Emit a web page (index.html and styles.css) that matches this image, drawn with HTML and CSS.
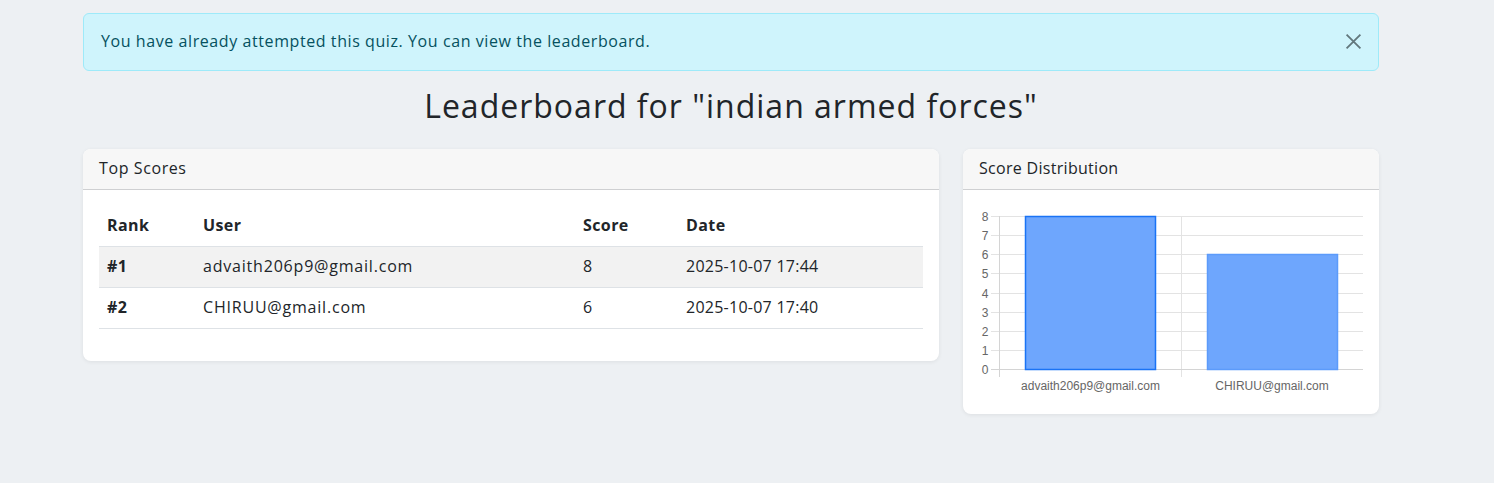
FILE: index.html
```html
<!DOCTYPE html>
<html lang="en">
<head>
<meta charset="utf-8">
<title>Leaderboard</title>
<link rel="stylesheet" href="styles.css">
</head>
<body>
<main class="container">
  <div class="alert">
    <span class="alert-text">You have already attempted this quiz. You can view the leaderboard.</span>
    <button class="alert-close" aria-label="Close">
      <svg width="17" height="17" viewBox="0 0 16 16"><path d="M1.5 1.5 L14.5 14.5 M14.5 1.5 L1.5 14.5" stroke="currentColor" stroke-width="1.7" fill="none"/></svg>
    </button>
  </div>
  <h2 class="title">Leaderboard for "indian armed forces"</h2>
  <div class="row">
    <section class="card card-wide">
      <div class="card-header">Top Scores</div>
      <div class="card-body">
        <table class="table">
          <colgroup>
            <col class="c-rank"><col class="c-user"><col class="c-score"><col class="c-date">
          </colgroup>
          <thead>
            <tr><th>Rank</th><th>User</th><th>Score</th><th>Date</th></tr>
          </thead>
          <tbody>
            <tr class="hl"><td class="rank">#1</td><td>advaith206p9@gmail.com</td><td>8</td><td class="date">2025-10-07 17:44</td></tr>
            <tr><td class="rank">#2</td><td>CHIRUU@gmail.com</td><td>6</td><td class="date">2025-10-07 17:40</td></tr>
          </tbody>
        </table>
      </div>
    </section>
    <section class="card card-narrow">
      <div class="card-header">Score Distribution</div>
      <div class="card-body">
        <svg class="chart" width="384" height="192" viewBox="0 0 384 192">
          <g class="grid">
            <line x1="12" y1="10.5" x2="384" y2="10.5"/>
            <line x1="12" y1="29.5" x2="384" y2="29.5"/>
            <line x1="12" y1="48.5" x2="384" y2="48.5"/>
            <line x1="12" y1="67.5" x2="384" y2="67.5"/>
            <line x1="12" y1="87.5" x2="384" y2="87.5"/>
            <line x1="12" y1="106.5" x2="384" y2="106.5"/>
            <line x1="12" y1="125.5" x2="384" y2="125.5"/>
            <line x1="12" y1="144.5" x2="384" y2="144.5"/>
            <line x1="202.5" y1="10" x2="202.5" y2="171"/>
          </g>
          <g class="axis">
            <line x1="12" y1="163.5" x2="384" y2="163.5"/>
            <line x1="20.5" y1="10" x2="20.5" y2="171"/>
          </g>
          <rect class="bar bar1" x="46.5" y="10.5" width="130" height="153"/>
          <rect class="bar bar2" x="228.5" y="48.5" width="130" height="115"/>
          <g class="ylab">
            <text x="9.5" y="14.5">8</text>
            <text x="9.5" y="33.5">7</text>
            <text x="9.5" y="52.5">6</text>
            <text x="9.5" y="71.5">5</text>
            <text x="9.5" y="91.5">4</text>
            <text x="9.5" y="110.5">3</text>
            <text x="9.5" y="129.5">2</text>
            <text x="9.5" y="148.5">1</text>
            <text x="9.5" y="167.5">0</text>
          </g>
          <g class="xlab">
            <text x="111.5" y="184">advaith206p9@gmail.com</text>
            <text x="293" y="184">CHIRUU@gmail.com</text>
          </g>
        </svg>
      </div>
    </section>
  </div>
</main>
</body>
</html>
```
FILE: styles.css
```css
* { box-sizing: border-box; }
html, body { margin: 0; padding: 0; }
body {
  background: #edf0f3;
  color: #212529;
  font-family: "Open Sans", "Noto Sans", sans-serif;
  font-size: 16px;
  line-height: 24px;
  width: 1494px;
  height: 483px;
  overflow: hidden;
}
.container {
  width: 1296px;
  margin-left: 83px;
  padding-top: 13px;
}
.alert {
  display: flex;
  align-items: center;
  justify-content: space-between;
  height: 58px;
  padding: 0 16px 2px 17px;
  background: #cff4fc;
  border: 1px solid #9eeaf9;
  border-radius: 6px;
  color: #055160;
  margin-bottom: 16px;
  letter-spacing: 0.58px;
}
.alert-close {
  border: 0;
  background: none;
  padding: 0;
  width: 17px;
  height: 17px;
  color: #62777c;
  display: flex;
}
.title {
  margin: 0 0 24px;
  font-size: 32px;
  font-weight: 500;
  line-height: 38px;
  text-align: center;
  letter-spacing: 1px;
}
.row {
  display: flex;
  gap: 24px;
  align-items: flex-start;
}
.card {
  background: #fff;
  border-radius: 8px;
  box-shadow: 0 1px 4px rgba(0, 0, 0, 0.07);
  overflow: hidden;
}
.card-wide { width: 856px; }
.card-narrow { width: 416px; }
.card-header {
  height: 41px;
  padding: 7px 16px 9px;
  background: #f7f7f7;
  border-bottom: 1px solid #cfd0d2;
  letter-spacing: 0.6px;
}
.card-narrow .card-header { letter-spacing: 0.3px; }
.card-body { padding: 16px; }
.table {
  width: 824px;
  border-collapse: collapse;
  table-layout: fixed;
  margin-bottom: 16px;
}
.c-rank { width: 96px; }
.c-user { width: 380px; }
.c-score { width: 103px; }
.c-date { width: 245px; }
.table th, .table td {
  text-align: left;
  padding: 7px 8px 9px;
  height: 41px;
  border-bottom: 1px solid #dee2e6;
  letter-spacing: 0.8px;
}
.table th { font-weight: 700; height: 40px; letter-spacing: 0.4px; }
.table tr.hl td { background: #f2f2f2; }
.table td.rank { font-weight: 700; letter-spacing: 0.4px; }
.table td.date { letter-spacing: 0.25px; }
.chart { display: block; }
.grid line, .axis line { stroke: #e3e3e3; stroke-width: 1; }
.axis line { stroke: #d4d4d4; }
.bar { fill: #6ea6fd; stroke-width: 1.5; }
.bar1 { stroke: #1a73f5; }
.bar2 { stroke: #5c9bfb; }
.ylab text, .xlab text {
  font-family: "Liberation Sans", Arial, sans-serif;
  font-size: 12px;
  fill: #666;
}
.ylab text { text-anchor: end; }
.xlab text { text-anchor: middle; }
```
